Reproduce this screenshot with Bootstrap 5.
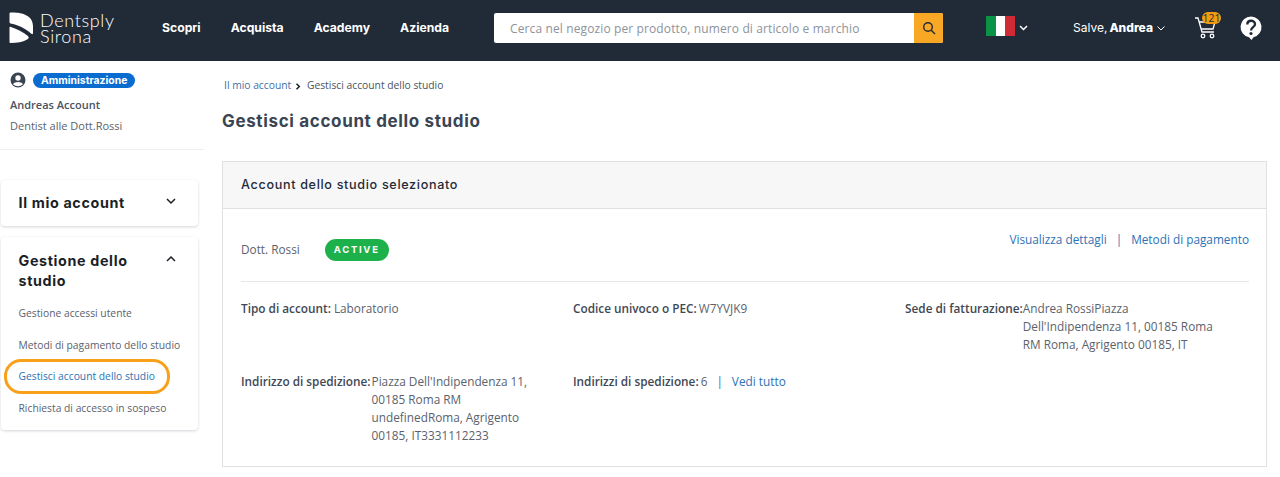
<!DOCTYPE html>
<html lang="it"><head><meta charset="utf-8"><title>Gestisci account dello studio</title>
<link href="https://cdn.jsdelivr.net/npm/bootstrap@5.3.0/dist/css/bootstrap.min.css" rel="stylesheet">
<style>
html,body{height:477px;overflow:hidden}
body{font-family:"Open Sans","Liberation Sans",sans-serif;font-size:11.8px;color:#4a5360;background:#fff}
.ds-head{height:61px;background:#212b38;color:#fff;padding-left:9px;padding-bottom:5px}
.ds-mark{width:25px;height:32px;flex:none}
.ds-logo{width:141px;margin-right:3px;gap:6px}
.ds-logotext{font-family:Lato,sans-serif;font-weight:300;font-size:18px;line-height:16px;letter-spacing:.65px;color:#fff}
.ds-menu{gap:30px;width:322px;font-family:Inter,sans-serif;font-weight:700;font-size:12.2px;padding-left:9px}
.ds-search{width:449px;height:30px;background:#fff;border-radius:2px;overflow:hidden;margin-left:19px}
.ds-search span{font-size:12px;color:#8d939b;padding:1px 0 0 16px;letter-spacing:.12px;flex:1}
.ds-sbtn{width:29px;height:30px;background:#f9a825;flex:none}
.ds-flag{width:29px;height:20px;margin-left:43px;margin-bottom:4px;flex:none}
.ds-salve{font-family:Inter,sans-serif;font-size:12px;margin-left:45px;white-space:nowrap}
.ds-name{font-weight:800;margin-left:2px}
.ds-cart{position:relative;width:28px;height:28px;margin-left:29px;flex:none}
.ds-count{position:absolute;left:8px;top:-2px;width:19px;height:12px;border-radius:6px;background:#f39c12;color:#212b38;font-size:10.5px;line-height:12px;text-align:center}
.ds-help{margin-left:17px;width:24px;height:28px;flex:none}
.ds-side{width:222px;flex:none;padding-top:11px}
.ds-user{width:204px;padding:0 0 0 10px;height:78px;border-bottom:1px solid #eceef0}
.ds-pill{background:#0b6cd0;color:#fff;font-family:Inter,sans-serif;font-weight:700;font-size:10.4px;height:15px;line-height:15px;padding:0 8px;border-radius:8px;margin-left:7px}
.ds-uname{font-weight:600;font-size:11px;margin-top:9px;color:#4a5360}
.ds-urole{font-size:11px;margin-top:4px;color:#5a626d}
.ds-panel{width:197px;margin-left:1px;background:#fff;border-radius:4px;box-shadow:0 1px 3px rgba(40,50,70,.2);padding:0 18px 0 17.5px}
.ds-p1{height:46px;margin-top:30px;margin-bottom:11px}
.ds-p2{height:193px;padding-top:14px}
.ds-ptitle{font-family:Inter,sans-serif;font-weight:700;font-size:14.3px;line-height:20px;color:#1b1f26;letter-spacing:.65px}
.ds-plinks{margin-top:14px}
.ds-plink{font-size:10.3px;line-height:16px;color:#5a626d;white-space:nowrap;display:block;margin-bottom:15.7px;position:relative;text-decoration:none}
.ds-on{color:#2c72b5;width:max-content}
.ds-on::after{content:"";position:absolute;left:-15px;right:-15px;top:-9px;bottom:-10px;border:3px solid #f9a01b;border-radius:17px}
.ds-main{flex:1;padding-right:13px;min-width:0}
.ds-crumb{font-size:10.3px;margin-top:18px;line-height:13px;padding-left:2px}
.ds-crumblnk{color:#3f6fa8;text-decoration:none}
.ds-h1{font-family:Inter,sans-serif;font-weight:700;font-size:17px;line-height:20px;margin:19px 0 30px;color:#3a4553;letter-spacing:.65px}
.ds-card{border:1px solid #dfe1e4;border-radius:0;height:306px}
.ds-chead{height:47px;background:#f7f7f7;border-bottom:1px solid #dfe1e4;padding-left:18px;font-family:Inter,sans-serif;font-weight:500;font-size:12.6px;color:#1f2a38;letter-spacing:.67px}
.ds-cbody{padding:0 17px 0 18px}
.ds-top{height:73px;border-bottom:1px solid #e6e7e9}
.ds-active{background:#1db14b;color:#fff;font-family:Inter,sans-serif;font-weight:700;font-size:9.5px;letter-spacing:1.7px;height:22px;line-height:22px;padding:0 9px;border-radius:11px;margin-left:25px}
.ds-status{margin-top:30px}
.ds-links{margin-top:22px}
.ds-lnk{color:#2c72b5;text-decoration:none}
.ds-sep{color:#2c72b5;margin:0 9px}
.ds-grid{display:grid;grid-template-columns:332px 332px 1fr;padding-top:17px;line-height:18px}
.ds-cell{display:flex;min-height:73px}
.ds-cell b{font-weight:600;color:#3f4854;white-space:nowrap;margin-right:3px}
.ds-cell b.ds-mid{margin-right:2px}
.ds-cell b.ds-tight{margin-right:1px}
.ds-cell b.ds-none{margin-right:0}
.ds-lab{color:#5a626d}
</style></head>
<body>
<header class="ds-head d-flex align-items-center">
  <div class="ds-logo d-flex align-items-center">
    <svg class="ds-mark" viewBox="0 0 25 32"><path fill="#fff" d="M.5 1.500Q.5 .5 1.500 .5C12 0 24 3 24 14V21Q24 23 22 21.500C16 16 8 12.500 1.500 11.500Q.5 11.300 .5 10Z"/><path fill="#fff" d="M.5 15.500Q.5 14.500 2 15C8 17 14 20 19 24Q20.500 25.500 19 27C14 30 8 31 1.500 31Q.5 31 .5 30Z"/></svg>
    <div class="ds-logotext">Dentsply<br>Sirona</div>
  </div>
  <nav class="ds-menu d-flex"><span>Scopri</span><span>Acquista</span><span>Academy</span><span>Azienda</span></nav>
  <div class="ds-search d-flex align-items-center"><span>Cerca nel negozio per prodotto, numero di articolo e marchio</span>
    <div class="ds-sbtn d-flex align-items-center justify-content-center"><svg width="14" height="14" viewBox="0 0 14 14" fill="none" stroke="#212b38" stroke-width="1.4"><circle cx="6" cy="6" r="4.3"/><path d="M9.2 9.2 13 13"/></svg></div></div>
  <svg class="ds-flag" viewBox="0 0 29 20"><rect width="10" height="20" fill="#0a9247"/><rect x="10" width="9" height="20" fill="#fff"/><rect x="19" width="10" height="20" fill="#cf2b37"/></svg>
  <svg width="9" height="6" viewBox="0 0 9 6" fill="none" stroke="#fff" stroke-width="1.5" class="ms-1"><path d="M1 1l3.500 3.500L8 1"/></svg>
  <div class="ds-salve d-flex align-items-center"><span>Salve,<span class="ds-name">Andrea</span></span>
    <svg width="8" height="5" viewBox="0 0 8 5" fill="none" stroke="#fff" class="ms-1"><path d="M.5.5l3.500 3.500L7.500.5"/></svg></div>
  <div class="ds-cart"><svg width="24" height="28" viewBox="0 0 24 28" fill="none" stroke="#fff" stroke-width="1.3"><path d="M1 4h3l4 14h12"/><path d="M5 8h16l-2 7H7"/><circle cx="9" cy="22" r="1.800"/><circle cx="18" cy="22" r="1.800"/></svg><span class="ds-count">121</span></div>
  <svg class="ds-help" viewBox="0 0 24 28"><path fill="#fff" d="M12 2.500a10.500 10.500 0 0 1 2.500 20.700L12.500 26 10 23.300A10.500 10.500 0 0 1 12 2.500Z"/><path fill="none" stroke="#212b38" stroke-width="2.400" d="M8.300 10.500c0-5 7.700-5 7.700-.3 0 3-4 3-4 6.300"/><circle cx="12" cy="19.500" r="1.600" fill="#212b38"/></svg>
</header>
<div class="d-flex">
  <aside class="ds-side">
    <div class="ds-user">
      <div class="d-flex align-items-center"><svg width="16" height="16" viewBox="0 0 16 16"><circle cx="8" cy="8" r="7.500" fill="#3a4553"/><circle cx="8" cy="6" r="2.700" fill="#fff"/><path fill="#fff" d="M3 12.300c1.500-3 8.500-3 10 0-2.500 2.500-7.500 2.500-10 0Z"/></svg><span class="ds-pill">Amministrazione</span></div>
      <div class="ds-uname">Andreas Account</div>
      <div class="ds-urole">Dentist alle Dott.Rossi</div>
    </div>
    <div class="ds-panel ds-p1 d-flex justify-content-between align-items-center">
      <div class="ds-ptitle">Il mio account</div>
      <svg width="10" height="7" viewBox="0 0 10 7" fill="none" stroke="#1b1f26" stroke-width="1.500" class="me-1 mb-1"><path d="M1 1l4 4 4-4"/></svg>
    </div>
    <div class="ds-panel ds-p2">
      <div class="d-flex justify-content-between align-items-start"><div class="ds-ptitle">Gestione dello<br>studio</div>
      <svg width="10" height="7" viewBox="0 0 10 7" fill="none" stroke="#1b1f26" stroke-width="1.500" class="me-1 mt-1"><path d="M1 6l4-4 4 4"/></svg></div>
      <div class="ds-plinks">
        <a class="ds-plink" href="#">Gestione accessi utente</a>
        <a class="ds-plink" href="#">Metodi di pagamento dello studio</a>
        <a class="ds-plink ds-on" href="#">Gestisci account dello studio</a>
        <a class="ds-plink" href="#">Richiesta di accesso in sospeso</a>
      </div>
    </div>
  </aside>
  <main class="ds-main">
    <div class="ds-crumb"><a class="ds-crumblnk" href="#">Il mio account</a><svg width="6" height="7" viewBox="0 0 6 7" fill="none" stroke="#1b1f26" stroke-width="1.500" class="mx-1"><path d="M1.500.8 4.300 3.500 1.500 6.200"/></svg>&#8201;Gestisci account dello studio</div>
    <div class="ds-h1">Gestisci account dello studio</div>
    <section class="ds-card">
      <div class="ds-chead d-flex align-items-center">Account dello studio selezionato</div>
      <div class="ds-cbody">
        <div class="ds-top d-flex justify-content-between align-items-start">
          <div class="ds-status d-flex align-items-center"><span class="ds-lab">Dott. Rossi</span><span class="ds-active">ACTIVE</span></div>
          <div class="ds-links"><a class="ds-lnk" href="#">Visualizza dettagli</a><span class="ds-sep">|</span><a class="ds-lnk" href="#">Metodi di pagamento</a></div>
        </div>
        <div class="ds-grid">
          <div class="ds-cell"><b>Tipo di account:</b><span class="ds-lab">Laboratorio</span></div>
          <div class="ds-cell"><b class="ds-mid">Codice univoco o PEC:</b><span class="ds-lab">W7YVJK9</span></div>
          <div class="ds-cell"><b class="ds-none">Sede di fatturazione:</b><span class="ds-lab">Andrea RossiPiazza<br>Dell'Indipendenza 11, 00185 Roma<br>RM Roma, Agrigento 00185, IT</span></div>
          <div class="ds-cell"><b class="ds-tight">Indirizzo di spedizione:</b><span class="ds-lab">Piazza Dell'Indipendenza 11,<br>00185 Roma RM<br>undefinedRoma, Agrigento<br>00185, IT3331112233</span></div>
          <div class="ds-cell"><b class="ds-mid">Indirizzi di spedizione:</b><span class="ds-lab">6<span class="ds-sep">|</span><a class="ds-lnk" href="#">Vedi tutto</a></span></div>
        </div>
      </div>
    </section>
  </main>
</div>
<script src="https://cdn.jsdelivr.net/npm/bootstrap@5.3.0/dist/js/bootstrap.bundle.min.js"></script>
</body></html>
